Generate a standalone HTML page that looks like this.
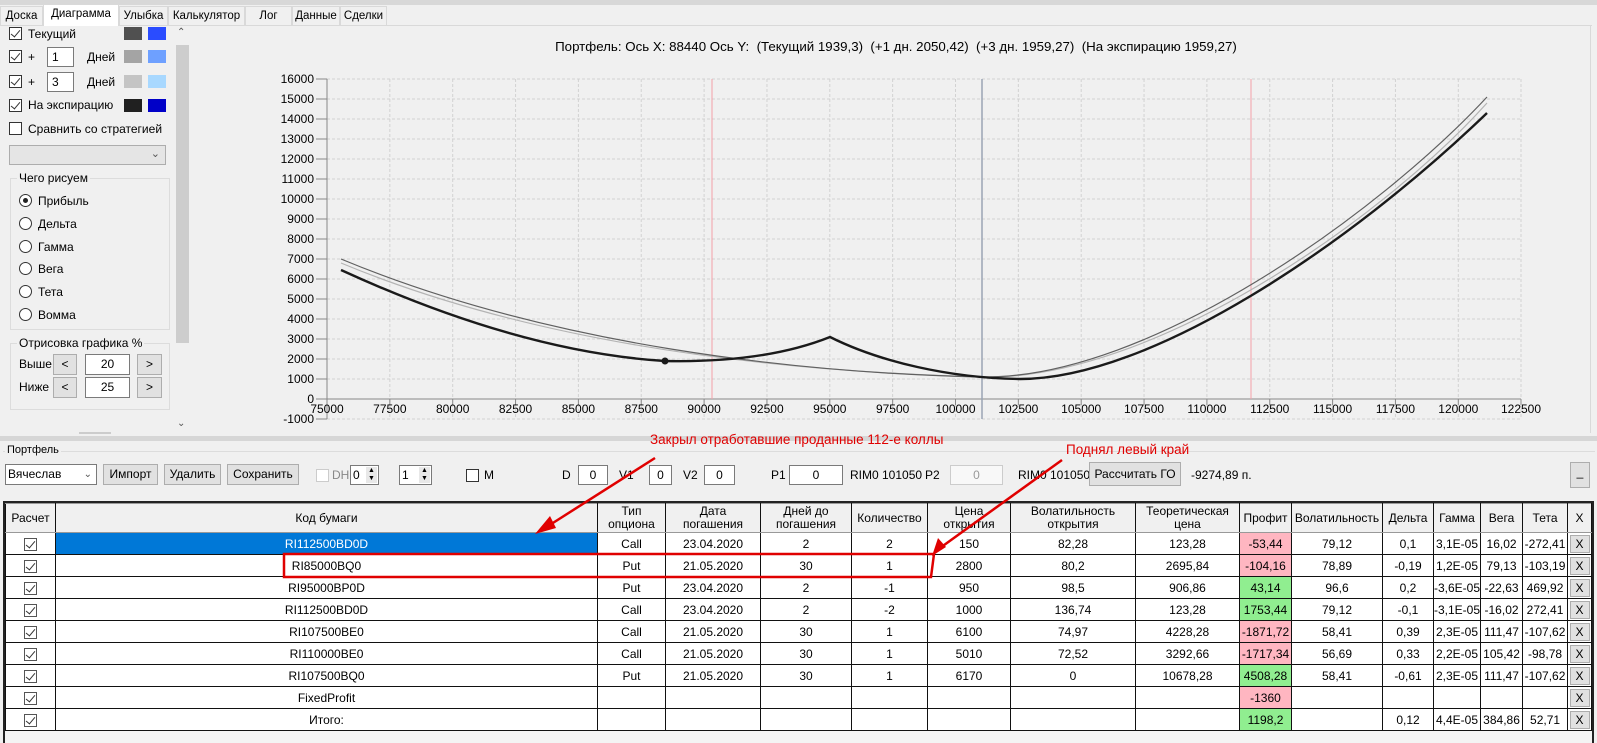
<!DOCTYPE html>
<html><head><meta charset="utf-8">
<style>
*{box-sizing:border-box;margin:0;padding:0}
body{width:1597px;height:743px;overflow:hidden;background:#f0f0f0;font-family:"Liberation Sans",sans-serif;font-size:12px;color:#000;position:relative}
.a{position:absolute;white-space:nowrap}
.tab{position:absolute;top:6px;height:19px;border:1px solid #d9d9d9;border-bottom:none;background:#f0f0f0;text-align:center;line-height:18px;font-size:11.5px;overflow:hidden}
.cb{position:absolute;width:13px;height:13px;border:1px solid #333;background:#fff}
.cb.on::after{content:"";position:absolute;left:3px;top:0px;width:4px;height:8px;border-right:1.5px solid #333;border-bottom:1.5px solid #333;transform:rotate(40deg)}
.sw{position:absolute;width:18px;height:13px}
.tb{position:absolute;background:#fff;border:1px solid #7a7a7a;height:20px;line-height:18px;padding-left:4px}
.rb{position:absolute;width:13px;height:13px;border:1px solid #333;border-radius:50%;background:#fff}
.btn{position:absolute;background:#e1e1e1;border:1px solid #adadad;text-align:center;line-height:18px;height:21px}
.grp{position:absolute;border:1px solid #dcdcdc}
.grp span{position:absolute;top:-8px;left:6px;background:#f0f0f0;padding:0 2px}
table{position:absolute;left:5px;top:503px;border-collapse:collapse;table-layout:fixed;font-size:12px}
td{border:1px solid #111;height:22px;text-align:center;background:#fff;padding:0;overflow:hidden;white-space:nowrap}
tr.h td{height:29px;background:#f0f0f0;line-height:13px;border-color:#999 #111}
td.p{background:#ffb6c1}td.g{background:#90ee90}
td.sel{background:#0078d7;color:#fff}
.ck{display:inline-block;width:13px;height:13px;border:1px solid #555;position:relative;vertical-align:middle}
.ck::after{content:"";position:absolute;left:3px;top:0;width:4px;height:8px;border-right:1px solid #333;border-bottom:1px solid #333;transform:rotate(40deg)}
.x{display:inline-block;width:20px;height:18px;background:#e1e1e1;border:1px solid #adadad;line-height:16px;vertical-align:middle}
.sp{position:absolute;right:1px;top:1px;width:11px;height:16px;background:#e8e8e8;font-size:7px;line-height:8px;text-align:center}
</style></head><body>
<div class="a" style="left:0;top:0;width:1597px;height:5px;background:#d8d8d8"></div>
<div class="a" style="left:0;top:25px;width:1592px;height:1px;background:#d9d9d9"></div>
<div class="tab" style="left:0;width:43px">Доска</div>
<div class="tab" style="left:43px;width:76px;top:4px;height:22px;background:#fff">Диаграмма</div>
<div class="tab" style="left:119px;width:49px">Улыбка</div>
<div class="tab" style="left:168px;width:77px">Калькулятор</div>
<div class="tab" style="left:245px;width:47px">Лог</div>
<div class="tab" style="left:292px;width:48px">Данные</div>
<div class="tab" style="left:340px;width:47px">Сделки</div>
<div class="a" style="left:1590px;top:26px;width:1px;height:407px;background:#d9d9d9"></div>

<div class="cb on" style="left:9px;top:27px"></div><div class="a" style="left:28px;top:27px">Текущий</div>
<div class="sw" style="left:124px;top:27px;background:#505050"></div><div class="sw" style="left:148px;top:27px;background:#2a4cff"></div>
<div class="cb on" style="left:9px;top:50px"></div><div class="a" style="left:28px;top:50px">+</div>
<div class="tb" style="left:47px;top:47px;width:27px;height:20px">1</div><div class="a" style="left:87px;top:50px">Дней</div>
<div class="sw" style="left:124px;top:50px;background:#a4a4a4"></div><div class="sw" style="left:148px;top:50px;background:#6ea0ff"></div>
<div class="cb on" style="left:9px;top:75px"></div><div class="a" style="left:28px;top:75px">+</div>
<div class="tb" style="left:47px;top:72px;width:27px;height:20px">3</div><div class="a" style="left:87px;top:75px">Дней</div>
<div class="sw" style="left:124px;top:75px;background:#c4c4c4"></div><div class="sw" style="left:148px;top:75px;background:#a8d8ff"></div>
<div class="cb on" style="left:9px;top:99px"></div><div class="a" style="left:28px;top:98px">На экспирацию</div>
<div class="sw" style="left:124px;top:99px;background:#202020"></div><div class="sw" style="left:148px;top:99px;background:#0000c8"></div>
<div class="cb" style="left:9px;top:122px"></div><div class="a" style="left:28px;top:122px">Сравнить со стратегией</div>
<div class="a" style="left:9px;top:145px;width:157px;height:20px;background:#e5e5e5;border:1px solid #adadad"><span style="position:absolute;right:5px;top:1px;font-size:11px;color:#555">&#8964;</span></div>
<div class="grp" style="left:10px;top:178px;width:160px;height:152px"><span>Чего рисуем</span></div>
<div class="rb" style="left:19px;top:194px"><div style="position:absolute;left:3px;top:3px;width:5px;height:5px;border-radius:50%;background:#222"></div></div><div class="a" style="left:38px;top:194px">Прибыль</div>
<div class="rb" style="left:19px;top:217px"></div><div class="a" style="left:38px;top:217px">Дельта</div>
<div class="rb" style="left:19px;top:240px"></div><div class="a" style="left:38px;top:240px">Гамма</div>
<div class="rb" style="left:19px;top:262px"></div><div class="a" style="left:38px;top:262px">Вега</div>
<div class="rb" style="left:19px;top:285px"></div><div class="a" style="left:38px;top:285px">Тета</div>
<div class="rb" style="left:19px;top:308px"></div><div class="a" style="left:38px;top:308px">Вомма</div>
<div class="grp" style="left:10px;top:343px;width:160px;height:67px"><span>Отрисовка графика %</span></div>
<div class="a" style="left:19px;top:357px">Выше</div>
<div class="btn" style="left:53px;top:354px;width:24px;height:21px">&lt;</div>
<div class="tb" style="left:85px;top:354px;width:45px;height:21px;text-align:center;padding:0">20</div>
<div class="btn" style="left:137px;top:354px;width:25px;height:21px">&gt;</div>
<div class="a" style="left:19px;top:380px">Ниже</div>
<div class="btn" style="left:53px;top:377px;width:24px;height:21px">&lt;</div>
<div class="tb" style="left:85px;top:377px;width:45px;height:21px;text-align:center;padding:0">25</div>
<div class="btn" style="left:137px;top:377px;width:25px;height:21px">&gt;</div>
<div class="a" style="left:79px;top:432px;width:32px;height:2px;background:#ccc"></div>
<div class="a" style="left:175px;top:26px;width:15px;height:410px;background:#f0f0f0"></div>
<div class="a" style="left:176px;top:45px;width:13px;height:298px;background:#cdcdcd"></div>
<div class="a" style="left:177px;top:27px;font-size:10px;color:#555">&#8963;</div>
<div class="a" style="left:177px;top:418px;font-size:10px;color:#555">&#8964;</div>

<svg class="a" style="left:0;top:0" width="1597" height="436">
<g stroke="#d2d2d2" stroke-dasharray="3,2" stroke-width="1" fill="none">
<path d="M327,79H1521M327,99H1521M327,119H1521M327,139H1521M327,159H1521M327,179H1521M327,199H1521M327,219H1521M327,239H1521M327,259H1521M327,279H1521M327,299H1521M327,319H1521M327,339H1521M327,359H1521M327,379H1521M327,419H1521"/>
<path d="M389.85,79V419M452.7,79V419M515.55,79V419M578.4,79V419M641.25,79V419M704.1,79V419M766.95,79V419M829.8,79V419M892.65,79V419M955.5,79V419M1018.35,79V419M1081.2,79V419M1144.05,79V419M1206.9,79V419M1269.75,79V419M1332.6,79V419M1395.45,79V419M1458.3,79V419M1521,79V419"/>
</g>
<g stroke="#888" stroke-width="1"><path d="M327,79V419M327,399H1521"/>
<path d="M316,79h11M316,99h11M316,119h11M316,139h11M316,159h11M316,179h11M316,199h11M316,219h11M316,239h11M316,259h11M316,279h11M316,299h11M316,319h11M316,339h11M316,359h11M316,379h11M316,399h11M316,419h11"/>
<path d="M327,399v6M389.85,399v6M452.7,399v6M515.55,399v6M578.4,399v6M641.25,399v6M704.1,399v6M766.95,399v6M829.8,399v6M892.65,399v6M955.5,399v6M1018.35,399v6M1081.2,399v6M1144.05,399v6M1206.9,399v6M1269.75,399v6M1332.6,399v6M1395.45,399v6M1458.3,399v6M1521,399v6"/></g>
<g font-family="Liberation Sans" font-size="12" text-anchor="end" fill="#000">
<text x="314" y="83">16000</text><text x="314" y="103">15000</text><text x="314" y="123">14000</text><text x="314" y="143">13000</text><text x="314" y="163">12000</text><text x="314" y="183">11000</text><text x="314" y="203">10000</text><text x="314" y="223">9000</text><text x="314" y="243">8000</text><text x="314" y="263">7000</text><text x="314" y="283">6000</text><text x="314" y="303">5000</text><text x="314" y="323">4000</text><text x="314" y="343">3000</text><text x="314" y="363">2000</text><text x="314" y="383">1000</text><text x="314" y="403">0</text><text x="314" y="423">-1000</text></g>
<g font-family="Liberation Sans" font-size="12" text-anchor="middle" fill="#000">
<text x="327" y="413">75000</text><text x="389.85" y="413">77500</text><text x="452.7" y="413">80000</text><text x="515.55" y="413">82500</text><text x="578.4" y="413">85000</text><text x="641.25" y="413">87500</text><text x="704.1" y="413">90000</text><text x="766.95" y="413">92500</text><text x="829.8" y="413">95000</text><text x="892.65" y="413">97500</text><text x="955.5" y="413">100000</text><text x="1018.35" y="413">102500</text><text x="1081.2" y="413">105000</text><text x="1144.05" y="413">107500</text><text x="1206.9" y="413">110000</text><text x="1269.75" y="413">112500</text><text x="1332.6" y="413">115000</text><text x="1395.45" y="413">117500</text><text x="1458.3" y="413">120000</text><text x="1521" y="413">122500</text></g>
<text x="896" y="51" font-family="Liberation Sans" font-size="13.3" text-anchor="middle">Портфель: Ось X: 88440 Ось Y: &#160;(Текущий 1939,3) &#160;(+1 дн. 2050,42) &#160;(+3 дн. 1959,27) &#160;(На экспирацию 1959,27)</text>
<path d="M712,79V399M1251,79V399" stroke="#f4a0a8" stroke-width="1"/>
<path d="M982,79V419" stroke="#9aa4b4" stroke-width="1.5"/>
<path d="M341,263 C550,350 800,372 982,377 C1150,381 1380,222 1487,103" stroke="#b4b4b4" stroke-width="1.2" fill="none"/>
<path d="M341,259 C550,346 800,373 982,377 C1150,379 1380,212 1487,97" stroke="#606060" stroke-width="1.2" fill="none"/>
<path d="M341,270 Q520,352 665,361 Q765,363 830,337 C880,362 950,378 1019,379 C1150,380 1350,245 1487,113" stroke="#1a1a1a" stroke-width="2.4" fill="none"/>
<circle cx="665" cy="361" r="3.5" fill="#1a1a1a"/>
</svg>

<div class="a" style="left:0;top:436px;width:1597px;height:5px;background:#d6d6d6"></div>
<div class="a" style="left:3px;top:451px;width:1592px;height:1px;background:#dcdcdc"></div>
<div class="a" style="left:5px;top:444px;background:#f0f0f0;padding:0 2px;font-size:11px">Портфель</div>
<div class="a" style="left:650px;top:432px;color:#e00000;font-size:13.5px">Закрыл отработавшие проданные 112-е коллы</div>
<div class="a" style="left:1066px;top:442px;color:#e00000;font-size:13.5px">Поднял левый край</div>

<div class="a" style="left:5px;top:464px;width:92px;height:21px;background:#fff;border:1px solid #7a7a7a;line-height:19px;padding-left:2px">Вячеслав<span style="position:absolute;right:4px;top:0;font-size:10px;color:#555">&#8964;</span></div>
<div class="btn" style="left:103px;top:464px;width:55px">Импорт</div>
<div class="btn" style="left:164px;top:464px;width:57px">Удалить</div>
<div class="btn" style="left:227px;top:464px;width:72px">Сохранить</div>
<div class="cb" style="left:316px;top:469px;border-color:#ccc"></div><div class="a" style="left:332px;top:468px;color:#888">DH</div>
<div class="tb" style="left:350px;top:465px;width:29px;padding-left:2px">0<span class="sp">▲<br>▼</span></div>
<div class="tb" style="left:399px;top:465px;width:33px;padding-left:2px">1<span class="sp">▲<br>▼</span></div>
<div class="cb" style="left:466px;top:469px"></div><div class="a" style="left:484px;top:468px">M</div>
<div class="a" style="left:562px;top:468px">D</div><div class="tb" style="left:578px;top:465px;width:30px;text-align:center;padding:0">0</div>
<div class="a" style="left:619px;top:468px">V1</div><div class="tb" style="left:649px;top:465px;width:23px;text-align:center;padding:0">0</div>
<div class="a" style="left:683px;top:468px">V2</div><div class="tb" style="left:704px;top:465px;width:31px;text-align:center;padding:0">0</div>
<div class="a" style="left:771px;top:468px">P1</div><div class="tb" style="left:789px;top:465px;width:54px;text-align:center;padding:0">0</div>
<div class="a" style="left:850px;top:468px">RIM0 101050</div><div class="a" style="left:925px;top:468px">P2</div>
<div class="tb" style="left:950px;top:465px;width:53px;text-align:center;padding:0;border-color:#ccc;color:#999;background:#f8f8f8">0</div>
<div class="a" style="left:1018px;top:468px">RIM0 101050</div>
<div class="btn" style="left:1089px;top:462px;width:92px;height:24px;line-height:22px">Рассчитать ГО</div>
<div class="a" style="left:1191px;top:468px">-9274,89 п.</div>
<div class="btn" style="left:1570px;top:462px;width:20px;height:26px">_</div>

<div class="a" style="left:3px;top:501px;width:1591px;height:242px;border:2px solid #222;border-bottom:none;background:#f4f4f4"></div>
<table>
<colgroup><col style="width:50px"><col style="width:542px"><col style="width:68px"><col style="width:95px"><col style="width:91px"><col style="width:76px"><col style="width:83px"><col style="width:125px"><col style="width:104px"><col style="width:52px"><col style="width:91px"><col style="width:51px"><col style="width:46px"><col style="width:42px"><col style="width:45px"><col style="width:24px"></colgroup>
<tr class="h"><td>Расчет</td><td>Код бумаги</td><td>Тип<br>опциона</td><td>Дата<br>погашения</td><td>Дней до<br>погашения</td><td>Количество</td><td>Цена<br>открытия</td><td>Волатильность<br>открытия</td><td>Теоретическая<br>цена</td><td>Профит</td><td>Волатильность</td><td>Дельта</td><td>Гамма</td><td>Вега</td><td>Тета</td><td>X</td></tr>
<tr><td><span class="ck"></span></td><td class="sel">RI112500BD0D</td><td>Call</td><td>23.04.2020</td><td>2</td><td>2</td><td>150</td><td>82,28</td><td>123,28</td><td class="p">-53,44</td><td>79,12</td><td>0,1</td><td>3,1E-05</td><td>16,02</td><td>-272,41</td><td><span class="x">X</span></td></tr>
<tr><td><span class="ck"></span></td><td>RI85000BQ0</td><td>Put</td><td>21.05.2020</td><td>30</td><td>1</td><td>2800</td><td>80,2</td><td>2695,84</td><td class="p">-104,16</td><td>78,89</td><td>-0,19</td><td>1,2E-05</td><td>79,13</td><td>-103,19</td><td><span class="x">X</span></td></tr>
<tr><td><span class="ck"></span></td><td>RI95000BP0D</td><td>Put</td><td>23.04.2020</td><td>2</td><td>-1</td><td>950</td><td>98,5</td><td>906,86</td><td class="g">43,14</td><td>96,6</td><td>0,2</td><td>-3,6E-05</td><td>-22,63</td><td>469,92</td><td><span class="x">X</span></td></tr>
<tr><td><span class="ck"></span></td><td>RI112500BD0D</td><td>Call</td><td>23.04.2020</td><td>2</td><td>-2</td><td>1000</td><td>136,74</td><td>123,28</td><td class="g">1753,44</td><td>79,12</td><td>-0,1</td><td>-3,1E-05</td><td>-16,02</td><td>272,41</td><td><span class="x">X</span></td></tr>
<tr><td><span class="ck"></span></td><td>RI107500BE0</td><td>Call</td><td>21.05.2020</td><td>30</td><td>1</td><td>6100</td><td>74,97</td><td>4228,28</td><td class="p">-1871,72</td><td>58,41</td><td>0,39</td><td>2,3E-05</td><td>111,47</td><td>-107,62</td><td><span class="x">X</span></td></tr>
<tr><td><span class="ck"></span></td><td>RI110000BE0</td><td>Call</td><td>21.05.2020</td><td>30</td><td>1</td><td>5010</td><td>72,52</td><td>3292,66</td><td class="p">-1717,34</td><td>56,69</td><td>0,33</td><td>2,2E-05</td><td>105,42</td><td>-98,78</td><td><span class="x">X</span></td></tr>
<tr><td><span class="ck"></span></td><td>RI107500BQ0</td><td>Put</td><td>21.05.2020</td><td>30</td><td>1</td><td>6170</td><td>0</td><td>10678,28</td><td class="g">4508,28</td><td>58,41</td><td>-0,61</td><td>2,3E-05</td><td>111,47</td><td>-107,62</td><td><span class="x">X</span></td></tr>
<tr><td><span class="ck"></span></td><td>FixedProfit</td><td></td><td></td><td></td><td></td><td></td><td></td><td></td><td class="p">-1360</td><td></td><td></td><td></td><td></td><td></td><td><span class="x">X</span></td></tr>
<tr><td><span class="ck"></span></td><td>Итого:</td><td></td><td></td><td></td><td></td><td></td><td></td><td></td><td class="g">1198,2</td><td></td><td>0,12</td><td>4,4E-05</td><td>384,86</td><td>52,71</td><td><span class="x">X</span></td></tr>
</table>

<svg class="a" style="left:0;top:0" width="1597" height="743">
<g stroke="#e00000" stroke-width="2.5" fill="none">
<path d="M655,458 L545,528"/>
<path d="M1062,460 L940,548"/>
<path d="M284,554 H934 L931,577 H284 Z"/>
</g>
<path d="M535,534 L550,516 L556,528 Z" fill="#e00000"/>
<path d="M932,556 L938,538 L946,547 Z" fill="#e00000"/>
</svg>
</body></html>
